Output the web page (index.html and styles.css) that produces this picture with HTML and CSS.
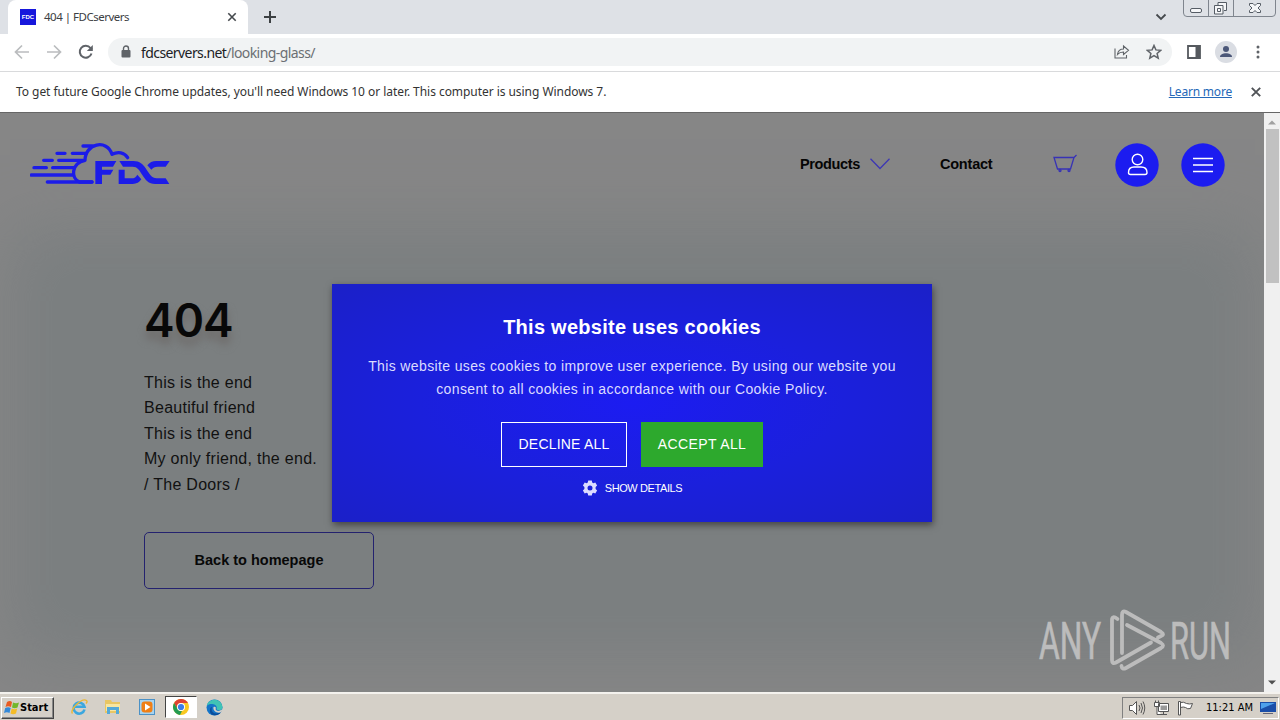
FILE: index.html
```html
<!DOCTYPE html>
<html lang="en">
<head>
<meta charset="utf-8">
<title>404 | FDCservers</title>
<link rel="stylesheet" href="styles.css">
</head>
<body>
<div class="screen">
  <div class="tabstrip">
    <div class="tab">
      <span class="favicon">FDC</span>
      <span class="tab-title">404 | FDCservers</span>
      <svg class="tab-close" width="10" height="10" viewBox="0 0 10 10"><path d="M1.300 1.300l7.400 7.400M8.700 1.300L1.300 8.700"/></svg>
    </div>
    <svg class="newtab" width="12" height="12" viewBox="0 0 12 12"><path d="M6 0v12M0 6h12"/></svg>
    <svg class="tabsearch" width="12" height="8" viewBox="0 0 12 8"><path d="M1.500 1.500L6 6l4.500-4.500"/></svg>
    <svg class="winbtns" width="94" height="17" viewBox="0 0 94 17"><path class="frame" d="M.5 0v13q0 3.500 3.500 3.500h85q3.500 0 3.500-3.500V0M25.500 0v16M50.500 0v16"/><rect x="7.500" y="8.500" width="11" height="4" rx="1.500"/><path class="glyph" d="M35 5V2.500h8.500v8H41M31.500 5.500h8.500v8.500h-8.500zM34.500 8.500h3v3h-3z"/><path class="glyph" d="M66.500 3.500h3.500l2 2 2-2h3.500v2L75 8l2.500 2.500v2H74l-2-2-2 2h-3.500v-2L69 8l-2.500-2.500z"/></svg>
  </div>
  <div class="toolbar">
    <svg class="ic back" width="16" height="16" viewBox="0 0 16 16"><path d="M15 8H2M8 1.500L1.500 8 8 14.500"/></svg>
    <svg class="ic fwd" width="16" height="16" viewBox="0 0 16 16"><path d="M1 8h13M8 1.500L14.500 8 8 14.500"/></svg>
    <svg class="ic reload" width="16" height="16" viewBox="0 0 16 16"><path d="M13.500 9.500A6 6 0 1 1 12.500 4L14 5.500"/><path class="fill" d="M14.800 1v6H8.800z"/></svg>
    <div class="omnibox">
      <svg class="lock" width="10" height="13" viewBox="0 0 10 13"><path d="M2.500 6V3.500a2.500 2.500 0 0 1 5 0V6"/><rect x=".5" y="5" width="9" height="7.500" rx="1"/></svg>
      <span class="url"><b>fdcservers.net</b>/looking-glass/</span>
      <svg class="share" width="16" height="15" viewBox="0 0 16 15"><path d="M1 4.500v9.500h11.500v-3M3.500 10.500C4 7 6 5 9.500 5V2l5 4.300-5 4.200V8C7 8 5 8.700 3.500 10.500z"/></svg>
      <svg class="star" width="16" height="16" viewBox="0 0 16 16"><path d="M8 1.500l1.900 4.400 4.800.4-3.600 3.100 1.100 4.700L8 11.600l-4.200 2.500 1.100-4.700L1.300 6.300l4.800-.4z"/></svg>
    </div>
    <svg class="panel" width="14" height="14" viewBox="0 0 14 14"><path d="M1 1h12v12H1z"/><path class="solid" d="M8.500 1H13v12H8.500z"/></svg>
    <svg class="avatar" width="22" height="22" viewBox="0 0 22 22"><circle class="disc" cx="11" cy="11" r="11"/><circle cx="11" cy="8" r="3"/><path d="M5 16c0-5 12-5 12 0z"/></svg>
    <svg class="dots" width="4" height="14" viewBox="0 0 4 14"><circle cx="2" cy="2" r="1.500"/><circle cx="2" cy="7" r="1.500"/><circle cx="2" cy="12" r="1.500"/></svg>
  </div>
  <div class="infobar">
    <span class="info-text">To get future Google Chrome updates, you'll need Windows 10 or later. This computer is using Windows 7.</span>
    <span class="learn">Learn more</span>
    <svg class="info-close" width="10" height="10" viewBox="0 0 10 10"><path d="M.8.800l8.400 8.400M9.200.800L.8 9.200"/></svg>
  </div>
  <div class="view">
    <div class="page">
      <div class="glow"></div>
      <header class="header">
        <svg class="logo" width="140" height="47" viewBox="60 30 420 141">
          <g class="lines"><path d="M219 48h28M141 70h24M187 70h42M101 91h26M146 91h74M72 113h37M128 113h63M64 135h126M112 156h134"/><path d="M246 156h-38c-25-12-26-55 17-65 0-50 66-66 81-18 18-9 37-6 47 10"/></g>
          <path class="mark" d="M256 93h63l-10 17h-33v9h34l-9 15h-25v28h-20zM328 93h42c20 0 29 10 37 22 12 18 18 30 33 30h27l11 17h-42c-21 0-30-13-39-27-10-16-15-25-29-25h-29zM326 119h18v26h20c10 0 14-4 18-11l12 14c-6 9-14 14-26 14h-42zM412 106c7-9 15-13 27-13h40l-12 17h-24c-9 0-14 3-19 9z"/>
        </svg>
        <nav class="nav">
          <span class="products">Products</span>
          <svg class="chev" width="20" height="12" viewBox="0 0 20 12"><path d="M.5.800L10 10.500 19.500.800"/></svg>
          <span class="contact">Contact</span>
          <svg class="cart" width="24" height="19" viewBox="0 0 24 19"><path d="M1 3.500h20L17.500 15h-13zM21 3.500L23.500 1"/><circle cx="7" cy="16.500" r="1"/><circle cx="16" cy="16.500" r="1"/></svg>
          <svg class="round user" width="44" height="44" viewBox="0 0 44 44"><circle class="bg" cx="22" cy="22" r="21.700"/><circle cx="22.500" cy="16.500" r="5.300"/><path d="M13.500 29.500q0-5.500 5.500-5.500h7q6 0 6 5.500 0 2-2 2H15.500q-2 0-2-2z"/></svg>
          <svg class="round" width="44" height="44" viewBox="0 0 44 44"><circle class="bg" cx="22" cy="22" r="21.700"/><path d="M12 15.500h20M12 22h20M12 28.500h20"/></svg>
        </nav>
      </header>
      <main class="content">
        <h1>404</h1>
        <p class="poem"><span>This is the end</span><br><span>Beautiful friend</span><br><span>This is the end</span><br><span>My only friend, the end.</span><br><span>/ The Doors /</span></p>
        <div class="home"><span>Back to homepage</span></div>
      </main>
      <section class="modal">
        <h2>This website uses cookies</h2>
        <p class="msg"><span>This website uses cookies to improve user experience. By using our website you</span><br><span>consent to all cookies in accordance with our Cookie Policy.</span></p>
        <div class="buttons"><div class="btn decline"><span>DECLINE ALL</span></div><div class="btn accept"><span>ACCEPT ALL</span></div></div>
        <div class="details"><svg width="16" height="16" viewBox="0 0 16 16"><path fill-rule="evenodd" d="M6.200.5h3.600l.4 2 1.200.7 1.900-.7 1.800 3.100L13.600 7v2l1.500 1.400-1.800 3.100-1.900-.7-1.200.7-.4 2H6.200l-.4-2-1.200-.7-1.900.7-1.800-3.100L2.400 9V7L.9 5.600l1.800-3.100 1.900.7 1.200-.7zM8 5.500a2.500 2.500 0 1 0 0 5 2.500 2.500 0 0 0 0-5z"/></svg><span>SHOW DETAILS</span></div>
      </section>
      <svg class="watermark" width="210" height="80" viewBox="0 0 210 80">
        <text x="4" y="53" textLength="62" lengthAdjust="spacingAndGlyphs">ANY</text>
        <path d="M82.500 13q-5.500-4-5.500 1v40q0 4.500 4 2.500l35-20M87 47V9q0-5 4-3l35 20q4 2.500 0 4l-3 1.500M92 19l34 18q4 2.500 0 5L91 62q-4 2-4.500-2"/>
        <text x="135" y="53" textLength="61" lengthAdjust="spacingAndGlyphs">RUN</text>
      </svg>
    </div>
    <div class="scrollbar">
      <svg width="8" height="5" viewBox="0 0 8 5"><path class="up" d="M0 4.500L4 .5l4 4z"/></svg>
      <div class="thumb"></div>
      <svg class="down" width="8" height="5" viewBox="0 0 8 5"><path d="M0 .5l4 4 4-4z"/></svg>
    </div>
  </div>
  <div class="taskbar">
    <div class="start">
      <svg width="16" height="15" viewBox="0 0 16 15"><path fill="#e85b22" d="M3 2q3-2 5 0L7 7Q4 5.500 1.500 7z"/><path fill="#73b72b" d="M9 2.500q3 1.500 6 0L13.500 7.500q-3 1.500-5.500 0z"/><path fill="#3489d9" d="M1.200 8q3-1.500 5.500 0L5.500 13Q3 11.500 0 13z"/><path fill="#f5bc27" d="M7.700 8.500q3 1.500 5.500 0L12 13.500q-3 1.500-5.500 0z"/></svg>
      <span>Start</span>
    </div>
    <svg class="app" width="18" height="18" viewBox="0 0 18 18"><path d="M14.500 11.500A5.500 5.500 0 1 1 14.500 8.800H5" fill="none" stroke="#3ba7df" stroke-width="2.600"/><path d="M2.500 15.500C-1 12 12-.5 16.500 2.500c1 .7.500 2-.5 3" fill="none" stroke="#ebb735" stroke-width="1.400"/></svg>
    <svg class="app" width="18" height="18" viewBox="0 0 18 18"><path fill="#e9c663" d="M1 2h6l1 2h8v11H1z"/><path fill="#f8e6a0" d="M2 6h14v7H2z"/><path fill="#54a9d8" d="M3 9h12v7h-3v-4H6v4H3z"/></svg>
    <svg class="app" width="18" height="18" viewBox="0 0 18 18"><rect x="1.500" y="1.500" width="15" height="15" fill="#a7d3ef" stroke="#4b91c6"/><rect x="3.500" y="3.500" width="11" height="11" rx="3" fill="#f07f15"/><path fill="#fff" d="M7 5.500L12.500 9 7 12.500z"/></svg>
    <div class="active"><svg width="16" height="16" viewBox="0 0 16 16"><circle cx="8" cy="8" r="8" fill="#f9c820"/><path fill="#df4234" d="M1.100 4A8 8 0 0 1 15 4H8a4 4 0 0 0-3.500 6z"/><path fill="#239b52" d="M1.100 4l3.500 6A4 4 0 0 0 9 12l-2 4A8 8 0 0 1 1.100 4z"/><circle cx="8" cy="8" r="4" fill="#fff"/><circle cx="8" cy="8" r="3.100" fill="#3b7de8"/></svg></div>
    <svg class="app edge" width="17" height="17" viewBox="0 0 17 17"><circle cx="8.500" cy="8.500" r="8" fill="#1474c8"/><path fill="#40c3b5" d="M.8 7C2-1 15-2 16.500 8c0 4-5 4-6 2 2-4-6-7-9.700-3z"/><path fill="#0b4d9b" d="M6 8c-2 6 4 8 9 5-3 5-12 4-11-2 0-2 1-3 2-3z"/><path fill="#d5d0c8" d="M7.500 8c2-1 3 1 2 2 1 3 5 2 7 0l-1 3c-4 2-9-1-8-5z"/></svg>
    <div class="tray">
      <svg width="18" height="16" viewBox="0 0 18 16"><path fill="#fff" d="M1.500 5.500h3l4-4v13l-4-4h-3z"/><path d="M11 5q2 3 0 6M13 3q3 5 0 10M15 1.500q3.500 6.500 0 13"/></svg>
      <svg class="net" width="17" height="16" viewBox="0 0 17 16"><path fill="#fff" d="M5.500 3.500h10v8h-10zM8 14.500h6M10.500 11.500v3M1.500 2.500h5v4h-5zM4 6.500v8h4M2.500.5v2M5.500.5v2"/><path fill="#999" stroke="none" d="M7.500 5.500h6.500v4.500H7.500z"/></svg>
      <svg width="17" height="16" viewBox="0 0 17 16"><path fill="#fff" d="M1.500 15V1.500h2V15zM3.500 2.500q3-1 6 1 3 1 6 0l-2 5q-3 1-5-1-2-1-5 0z"/></svg>
      <span class="clock">11:21 AM</span>
      <svg class="desk" width="16" height="14" viewBox="0 0 16 14"><path fill="#1b4ea8" stroke="none" d="M0 1h16v10H0z"/><path fill="#4ea0eb" stroke="none" d="M1 2h14L1 8z"/><path stroke="#667" d="M3 12.500h10"/></svg>
    </div>
  </div>
</div>
</body>
</html>
```
FILE: styles.css
```css
* { box-sizing: border-box; }
body { margin: 0; font-family: "Noto Sans", sans-serif; }
svg { display: block; flex: none; fill: none; }
span { white-space: nowrap; }
.screen { width: 1280px; height: 720px; overflow: hidden; display: flex; flex-direction: column; background: #fff; }
.tabstrip { height: 34px; flex: none; background: #dee1e6; display: flex; align-items: center; padding-left: 8px; }
.tab { width: 240px; height: 34px; background: #fff; border-radius: 8px 8px 0 0; display: flex; align-items: center; padding: 0 11px 0 12px; }
.favicon { width: 16px; height: 16px; background: #1717dc; color: #fff; font: bold 6px/16px "Liberation Sans", sans-serif; text-align: center; }
.tab-title { margin: 0 0 1px 8px; font-size: 11.5px; letter-spacing: -.5px; color: #3c4043; }
.tab-close { margin-left: auto; stroke: #45494d; stroke-width: 1.6; }
.newtab { margin-left: 16px; stroke: #3c4043; stroke-width: 2; }
.tabsearch { margin-left: auto; stroke: #45494d; stroke-width: 1.8; }
.winbtns { margin: 0 3px 17px 16px; stroke: #555c65; }
.winbtns .frame { stroke: #7f858e; }
.winbtns .glyph, .winbtns rect { fill: #f5f6f8; }
.toolbar { height: 38px; flex: none; display: flex; align-items: center; border-bottom: 1px solid #d9dadc; padding: 0 20px 2px 14px; }
.ic { stroke: #babcbe; stroke-width: 1.7; }
.fwd, .reload { margin-left: 16px; }
.reload { stroke: #5f6368; stroke-width: 2; }
.reload .fill { fill: #5f6368; stroke: none; }
.omnibox { flex: 1; height: 28px; margin-left: 14px; border-radius: 14px; background: #f1f3f4; display: flex; align-items: center; padding: 0 10px 0 13px; }
.lock { stroke: #5f6368; stroke-width: 1.4; }
.lock rect { fill: #5f6368; stroke: none; }
.url { margin: 1px 0 0 10px; font-size: 14px; letter-spacing: -.58px; color: #6b6f73; }
.url b { font-weight: normal; color: #202124; }
.share { margin-left: auto; stroke: #5f6368; stroke-width: 1.1; }
.star { margin-left: 16px; stroke: #5f6368; stroke-width: 1.5; }
.panel { margin-left: 15px; stroke: #55595e; stroke-width: 1.8; }
.panel .solid { fill: #55595e; stroke: none; }
.avatar { margin-left: 14px; fill: #4b5778; }
.avatar .disc { fill: #dadde3; }
.dots { margin-left: 19px; fill: #5f6368; }
.infobar { height: 41px; flex: none; display: flex; align-items: center; padding: 0 19px 0 16px; border-bottom: 1px solid #666; font-size: 12px; color: #333; }
.info-text { margin-bottom: 2px; letter-spacing: -.05px; }
.learn { margin: 0 0 2px auto; color: #2568b8; text-decoration: underline; letter-spacing: -.2px; }
.info-close { margin-left: 19px; stroke: #505357; stroke-width: 1.9; }
.view { height: 579px; flex: none; display: flex; }
.page { position: relative; width: 1264px; overflow: hidden; background: #868686; }
.glow { position: absolute; left: 60px; top: 165px; width: 1145px; height: 330px; background: #7b7f80; box-shadow: 0 0 60px 50px #7b7f80; }
.header { position: relative; display: flex; align-items: flex-start; justify-content: space-between; padding: 27px 39.500px 0 30px; height: 104px; }
.logo .lines { stroke: #1c1ce8; stroke-width: 10; stroke-linecap: round; stroke-linejoin: round; }
.logo .mark { fill: #1c1ce8; }
.nav { display: flex; align-items: center; height: 44px; margin-top: 3px; font: bold 14.500px "Liberation Sans", sans-serif; color: #050505; }
.products { margin-bottom: 2px; letter-spacing: -.35px; }
.chev { margin: 0 50px 2px 10px; stroke: #3d37b3; stroke-width: 1.3; }
.contact { margin: 0 60px 2px 0; letter-spacing: -.2px; }
.cart { margin-bottom: 3px; stroke: #3732b6; stroke-width: 1.3; }
.round { margin-left: 22px; stroke: #fff; stroke-width: 1.4; }
.user { margin-left: 38px; }
.round .bg { fill: #1c1cf0; stroke: none; }
.content { position: relative; padding-left: 144px; }
h1 { margin: 77px 0 0; height: 52px; font: 600 46px/52px Inter, sans-serif; color: #080808; text-shadow: 0 8px 8px #6e6b69; letter-spacing: -1px; }
.poem { margin: 24px 0 0; font: 16px/25.4px "Liberation Sans", sans-serif; letter-spacing: .28px; color: #111; }
.home { margin-top: 35px; width: 230px; height: 57px; border: 1px solid #24226f; border-radius: 5px; display: flex; align-items: center; justify-content: center; padding-bottom: 2px; font: bold 14.500px "Liberation Sans", sans-serif; color: #080808; }
.modal { position: absolute; left: 332px; top: 171px; width: 600px; height: 238px; background: radial-gradient(ellipse at center, #1c1cf1, #1b20dc 50%, #1b20c8); box-shadow: 1px 3px 7px #444; color: #fff; display: flex; flex-direction: column; align-items: center; font-family: "Liberation Sans", sans-serif; }
h2 { margin: 30px 0 0; font-size: 20px; line-height: 26px; letter-spacing: .26px; white-space: nowrap; }
.msg { margin: 15px 0 0; font-size: 14px; line-height: 23px; letter-spacing: .37px; text-align: center; color: #dcdcff; }
.buttons { display: flex; gap: 14px; margin-top: 21px; }
.btn { height: 45px; width: 126px; display: flex; align-items: center; justify-content: center; padding-bottom: 2px; font-size: 14px; letter-spacing: .2px; }
.decline { border: 1px solid #fff; }
.accept { width: 122px; background: #2da92d; letter-spacing: .4px; }
.details { margin-top: 13px; display: flex; align-items: center; gap: 7px; font-size: 11px; letter-spacing: -.4px; }
.details svg { fill: #dcdcff; }
.watermark { position: absolute; left: 1035px; top: 493px; fill: #bcbcbc; overflow: visible; }
.watermark text { font: 400 52px Roboto, sans-serif; stroke: #bcbcbc; stroke-width: .7; }
.watermark path { fill: none; stroke: #bcbcbc; stroke-width: 3.8; stroke-linecap: round; }
.scrollbar { width: 16px; background: #f0f0f0; display: flex; flex-direction: column; align-items: center; padding: 7px 0; }
.scrollbar svg { fill: #505050; }
.scrollbar .up { fill: #a0a0a0; }
.thumb { width: 13px; height: 154px; margin-top: 4px; background: #c1c1c1; }
.down { margin-top: auto; }
.taskbar { height: 28px; flex: none; background: #d5d0c8; border-top: 2px solid #f4f2ee; display: flex; align-items: center; padding: 0 1px; }
.start { width: 53px; height: 22px; border: 1px solid; border-color: #fff #444 #444 #fff; box-shadow: inset -1px -1px #888; display: flex; align-items: center; padding: 0 0 2px 2px; margin-top: 2px; font: bold 11px "DejaVu Sans Condensed", sans-serif; }
.app { margin-left: 16px; }
.active { width: 32px; height: 22px; margin-left: 9px; border: 1px solid; border-color: #444 #fff #fff #444; background: #fff; display: flex; align-items: center; justify-content: center; }
.edge { margin-left: 9px; }
.tray { margin: 2px 0 0 auto; width: 157px; height: 22px; border: 1px solid; border-color: #808080 #fff #fff #808080; display: flex; align-items: center; padding: 0 2px 0 5px; }
.tray svg { stroke: #555; }
.tray svg + svg { margin-left: 7px; }
.tray .desk { margin-left: auto; }
.clock { margin: 0 0 1px 12px; font: 11px "DejaVu Sans Condensed", sans-serif; color: #000; }
```
